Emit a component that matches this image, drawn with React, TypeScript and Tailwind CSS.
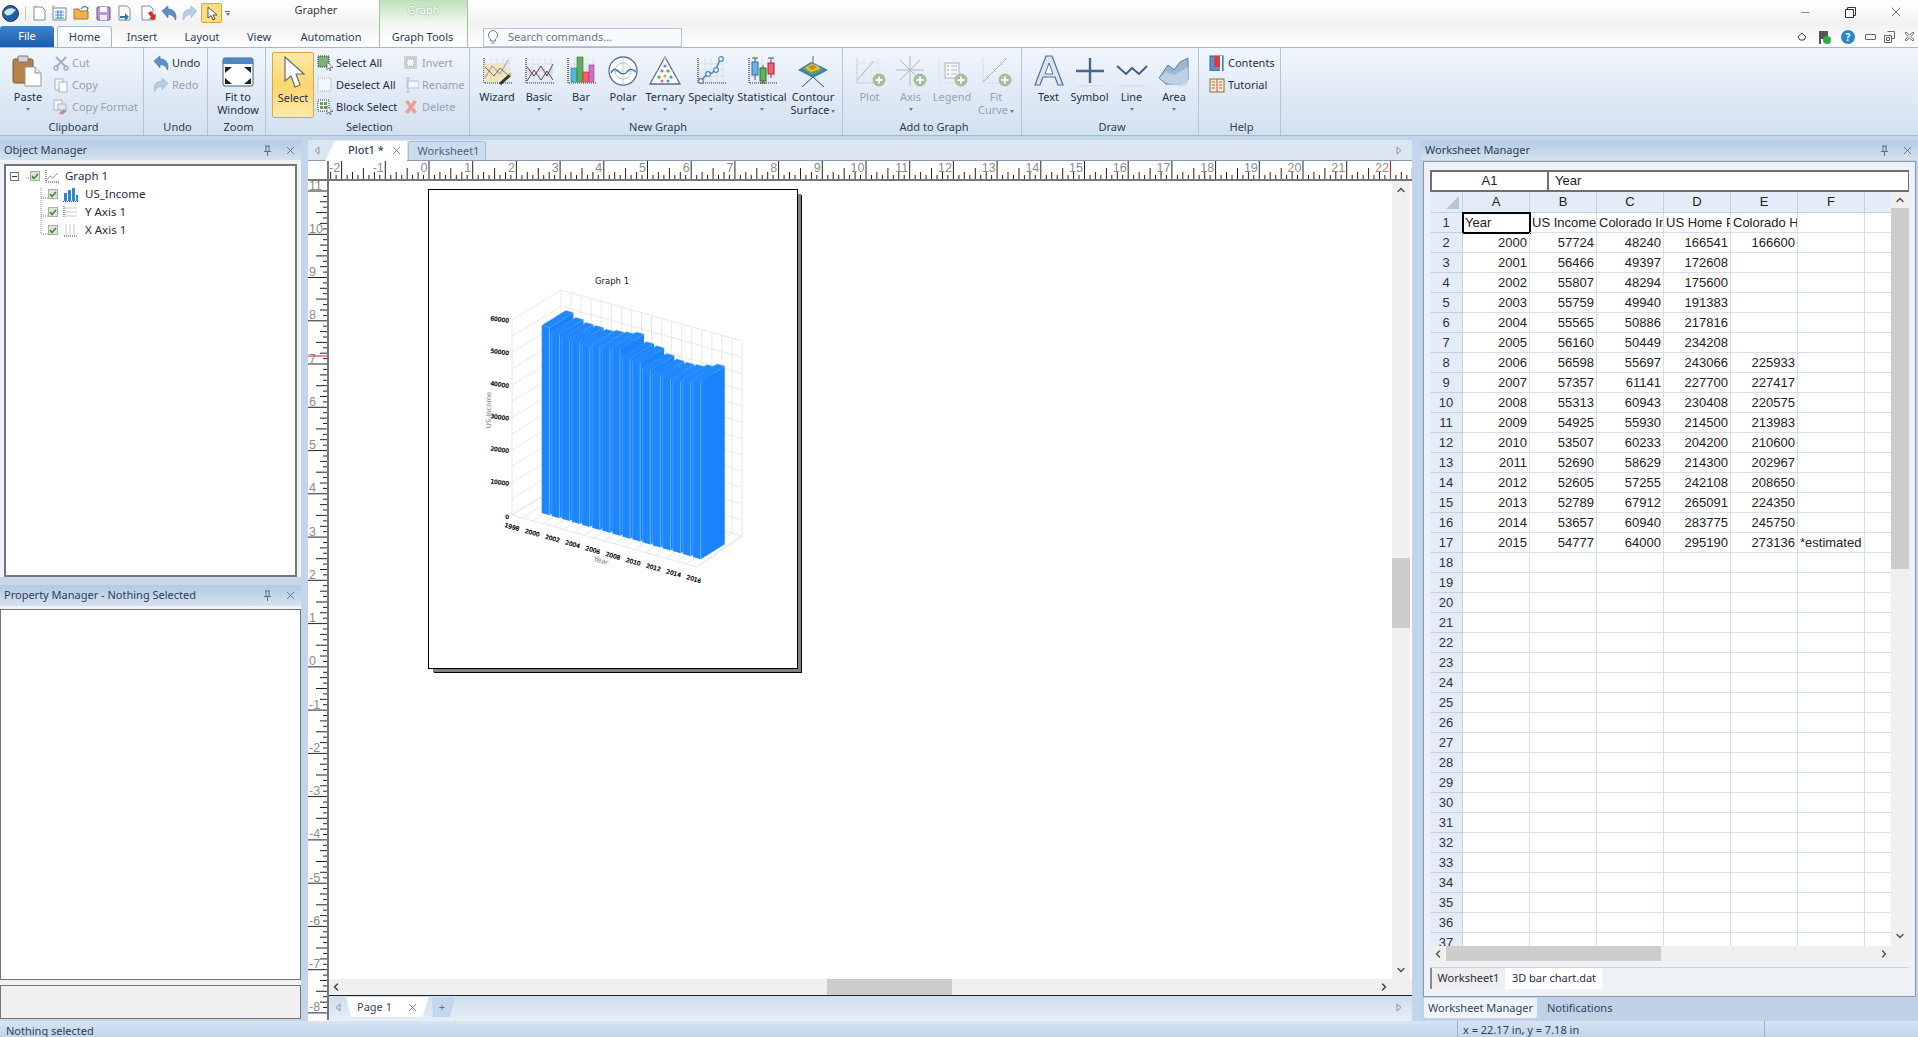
import React from "react";
import { ChevronUp, ChevronDown, ChevronLeft, ChevronRight, X, Minus } from "lucide-react";

const sheetRows: (string | number)[][] = [
  [2000, 57724, 48240, 166541, 166600],
  [2001, 56466, 49397, 172608],
  [2002, 55807, 48294, 175600],
  [2003, 55759, 49940, 191383],
  [2004, 55565, 50886, 217816],
  [2005, 56160, 50449, 234208],
  [2006, 56598, 55697, 243066, 225933],
  [2007, 57357, 61141, 227700, 227417],
  [2008, 55313, 60943, 230408, 220575],
  [2009, 54925, 55930, 214500, 213983],
  [2010, 53507, 60233, 204200, 210600],
  [2011, 52690, 58629, 214300, 202967],
  [2012, 52605, 57255, 242108, 208650],
  [2013, 52789, 67912, 265091, 224350],
  [2014, 53657, 60940, 283775, 245750],
  [2015, 54777, 64000, 295190, 273136],
];
const income = sheetRows.map((r) => r[1] as number);

/* ---------- small drawings ---------- */

function PlusBadge() {
  return (
    <g>
      <circle cx="25" cy="25" r="6.5" fill="#a3bf9f" />
      <path d="M25 21.5v7M21.5 25h7" stroke="#fff" strokeWidth="2" />
    </g>
  );
}

function Ico({ s = 32, children }: { s?: number; children: React.ReactNode }) {
  return (
    <svg width={s} height={s} viewBox={`0 0 ${s} ${s}`} fill="none" className="shrink-0">
      {children}
    </svg>
  );
}

const GridBack = () => (
  <path d="M4 3v24h26M10 3v24M16 3v24M22 3v24M28 3v24M4 9h26M4 15h26M4 21h26" stroke="#d5dbe3" strokeWidth="0.7" />
);
const AxisDots = () => <path d="M3 3v25h28" stroke="#333" strokeWidth="1.2" strokeDasharray="1 1" />;

const icons: Record<string, React.ReactNode> = {
  paste: (
    <Ico>
      <rect x="1" y="4" width="20" height="24" rx="2" fill="#b5824c" stroke="#7c5a33" />
      <rect x="6" y="1" width="10" height="6" rx="1" fill="#d5d5d5" stroke="#777" />
      <path d="M13 12h10l6 6v13H13z" fill="#fff" stroke="#8a97a6" />
      <path d="M23 12v6h6" fill="#e6edf4" stroke="#8a97a6" />
    </Ico>
  ),
  fit: (
    <Ico>
      <rect x="1" y="3" width="30" height="28" rx="2" fill="#fff" stroke="#3b5c83" />
      <path d="M1 5a2 2 0 0 1 2-2h26a2 2 0 0 1 2 2v4H1z" fill="#4d86c6" />
      <path d="M3 12l7 0-7 6zM29 12l-7 0 7 6zM3 29l7 0-7-6zM29 29l-7 0 7-6z" fill="#222" />
    </Ico>
  ),
  select: (
    <Ico>
      <path d="M8 1l0 24 6-5 4 11 5-2-4-11 8 0z" fill="#fff" stroke="#6b6b6b" strokeWidth="1.2" />
    </Ico>
  ),
  wizard: (
    <Ico>
      <GridBack />
      <AxisDots />
      <path d="M3 9l9 0 14 0 0 14-9 4H3z" fill="#efe4ae" opacity="0.8" />
      <path d="M4 23l7-12 8 8 8-14" stroke="#c79ad0" strokeWidth="1.3" />
      <path d="M4 12l9 9 6-8 9 8" stroke="#555" strokeWidth="0.8" />
      <path d="M18 28l10-9 2 2-10 9z" fill="#333" />
      <path d="M27 19l2-2 2 2-2 2z" fill="#e9c23c" />
    </Ico>
  ),
  basic: (
    <Ico>
      <GridBack />
      <AxisDots />
      <path d="M4 10l7 10 7-9 6 9 6-10v8l-6 6-6-9-7 9-7-8z" fill="#f1c9ec" opacity="0.7" />
      <path d="M4 26l7-11 7 10 6-9 6 9M4 12l7 9 7-10 6 10 6-12" stroke="#3f3f3f" strokeWidth="0.9" />
    </Ico>
  ),
  bar: (
    <Ico>
      <GridBack />
      <AxisDots />
      <rect x="6" y="13" width="6" height="14" fill="#56b6d9" stroke="#2f7f9f" strokeWidth="0.6" />
      <rect x="12" y="2" width="6" height="25" fill="#5fae5a" stroke="#2f7430" strokeWidth="0.6" />
      <rect x="18" y="17" width="6" height="10" fill="#ff5a6e" stroke="#b52e3c" strokeWidth="0.6" />
      <rect x="24" y="10" width="5" height="17" fill="#cf6fc7" stroke="#8e4389" strokeWidth="0.6" />
    </Ico>
  ),
  polar: (
    <Ico>
      <circle cx="16" cy="16" r="14" fill="#fff" stroke="#5d7892" strokeWidth="1.4" />
      <circle cx="16" cy="16" r="8" stroke="#b6c4d2" />
      <path d="M2 16h28M16 2v28" stroke="#c4ced9" />
      <path d="M4 18c3-6 6-3 8-1s6 3 8 0 5-4 9 0" stroke="#2f6ea8" strokeWidth="1.3" />
    </Ico>
  ),
  ternary: (
    <Ico>
      <path d="M16 2L31 29H1z" fill="#fff" stroke="#5a6b7c" strokeWidth="1.3" />
      <path d="M8 16h16M4 23h24M16 2L9 29M16 2l7 27" stroke="#d5dce3" strokeWidth="0.7" />
      <circle cx="16" cy="11" r="1.6" fill="#5b8fc7" />
      <circle cx="13" cy="16" r="1.6" fill="#c766b8" />
      <circle cx="19" cy="16" r="1.6" fill="#57a657" />
      <circle cx="10" cy="22" r="1.6" fill="#57a657" />
      <circle cx="16" cy="21" r="1.6" fill="#e0a23c" />
      <circle cx="22" cy="22" r="1.6" fill="#5b8fc7" />
      <circle cx="13" cy="26" r="1.6" fill="#c766b8" />
      <circle cx="19" cy="26" r="1.6" fill="#5b8fc7" />
    </Ico>
  ),
  specialty: (
    <Ico>
      <GridBack />
      <AxisDots />
      <path d="M6 26l6-7 5-1 4-4 4-9" stroke="#4a86bd" strokeWidth="1.5" />
      <circle cx="6" cy="26" r="2.3" fill="#fff" stroke="#4a86bd" strokeWidth="1.2" />
      <circle cx="13" cy="19" r="2.3" fill="#fff" stroke="#4a86bd" strokeWidth="1.2" />
      <circle cx="21" cy="15" r="2.3" fill="#fff" stroke="#4a86bd" strokeWidth="1.2" />
      <circle cx="26" cy="4" r="2.3" fill="#fff" stroke="#4a86bd" strokeWidth="1.2" />
    </Ico>
  ),
  statistical: (
    <Ico>
      <GridBack />
      <AxisDots />
      <path d="M9 3v22M17 10v18M25 3v20M6 3h6M14 28h6M22 3h6" stroke="#444" strokeWidth="0.9" />
      <rect x="6" y="7" width="6" height="13" fill="#6cb2e4" stroke="#2f6ea8" />
      <rect x="14" y="13" width="6" height="13" fill="#69ae5c" stroke="#2d6e2d" />
      <rect x="22" y="8" width="6" height="11" fill="#f1626f" stroke="#a12c37" />
    </Ico>
  ),
  contour: (
    <Ico>
      <path d="M16 1v8" stroke="#444" strokeWidth="0.8" />
      <path d="M16 22L5 32M16 22l11 10" stroke="#333" strokeWidth="0.9" />
      <path d="M1 15L14 7l5 2 12 6-15 8z" fill="#3f78b5" />
      <path d="M5 14l9-6 6 2 7 5-12 5z" fill="#5aa85a" />
      <path d="M8 13l7-4 6 2 2 3-9 3z" fill="#e9c23c" />
      <path d="M11 12l5-2 4 2-5 3z" fill="#e5762e" />
    </Ico>
  ),
  plot: (
    <Ico>
      <path d="M3 3v25h26M3 8h26M3 14h26M3 20h26M10 3v25M17 3v25M24 3v25" stroke="#e1e5ea" strokeWidth="0.7" />
      <path d="M3 25L20 6" stroke="#a9b2bc" strokeWidth="1" />
      <path d="M3 3v25h22" stroke="#bbb" strokeWidth="1" strokeDasharray="1 1" />
      <PlusBadge />
    </Ico>
  ),
  axis: (
    <Ico>
      <path d="M15 1v30M1 15h28M5 5l20 20M25 5L5 25" stroke="#aeb6bf" strokeWidth="1" />
      <PlusBadge />
    </Ico>
  ),
  legend: (
    <Ico>
      <path d="M3 3v25h24M20 3L3 20" stroke="#c9ced4" strokeWidth="0.9" strokeDasharray="1 1" />
      <rect x="9" y="8" width="14" height="15" fill="#f7f8fa" stroke="#aab2bc" />
      <path d="M11 11h2M11 15h2M11 19h2" stroke="#a9bf9f" strokeWidth="1.5" />
      <path d="M15 11h6M15 15h6M15 19h6" stroke="#b5bcc4" />
      <PlusBadge />
    </Ico>
  ),
  fitcurve: (
    <Ico>
      <path d="M3 3v25h24" stroke="#ccc" strokeDasharray="1 1" />
      <path d="M3 27L27 3" stroke="#aeb6bf" />
      <path d="M6 21l3 3M9 21l-3 3M13 14l3 3M16 14l-3 3M20 7l3 3M23 7l-3 3" stroke="#aeb6bf" strokeWidth="0.9" />
      <PlusBadge />
    </Ico>
  ),
  text: (
    <Ico>
      <path d="M13 1h6l11 29h-5l-3-8H10l-3 8H2z" fill="#dbe5f1" stroke="#4d6f9e" strokeWidth="1.2" />
      <path d="M16 8l4 11h-8z" fill="#fff" stroke="#4d6f9e" />
    </Ico>
  ),
  symbol: (
    <Ico>
      <path d="M16 3v25M2 16h28" stroke="#46658f" strokeWidth="2.4" />
      <path d="M3 31h26" stroke="#d3dbe5" />
    </Ico>
  ),
  line: (
    <Ico>
      <path d="M1 11l9 8 6-6 7 6 8-8" stroke="#3f5a7f" strokeWidth="1.8" />
      <path d="M3 31h26" stroke="#d3dbe5" />
    </Ico>
  ),
  area: (
    <Ico>
      <path d="M1 23l9-13 6 5 6-8 8-4v22l-6 4H8z" fill="#9eb7d6" stroke="#5d7ba3" />
      <path d="M8 28l-7-5 7-6 8 3 14-8v17l-6 3z" fill="#c7d6e8" opacity="0.8" />
    </Ico>
  ),
  cut: (
    <Ico s={16}>
      <path d="M3 2l10 10M13 2L3 12" stroke="#9db0c6" strokeWidth="2" />
      <circle cx="3" cy="13" r="2" stroke="#9db0c6" strokeWidth="1.4" />
      <circle cx="13" cy="13" r="2" stroke="#9db0c6" strokeWidth="1.4" />
    </Ico>
  ),
  copy: (
    <Ico s={16}>
      <path d="M2 2h8v11H2z" fill="#f5f7fa" stroke="#a7b4c2" />
      <path d="M6 5h8v10H6z" fill="#fff" stroke="#a7b4c2" />
    </Ico>
  ),
  copyformat: (
    <Ico s={16}>
      <path d="M1 1h8v10H1z" fill="#f5f7fa" stroke="#a7b4c2" />
      <path d="M5 5l8 0v6H5z" fill="#e4e8ed" stroke="#a7b4c2" />
      <path d="M6 14l5-4 3 2-5 4z" fill="#c7928a" />
    </Ico>
  ),
  undo: (
    <Ico s={16}>
      <path d="M1 6l6-5v3c5 0 8 3 8 8 0 1-.3 2-.6 3-1-3.500-3.400-5.500-7.400-5.500V13z" fill="#5d8fc9" stroke="#3a6aa6" strokeWidth="0.6" />
    </Ico>
  ),
  redo: (
    <Ico s={16}>
      <path d="M15 6L9 1v3C4 4 1 7 1 12c0 1 .3 2 .6 3C2.600 11.500 5 9.500 9 9.500V13z" fill="#b7cbe2" stroke="#9db6d2" strokeWidth="0.6" />
    </Ico>
  ),
  selectall: (
    <Ico s={16}>
      <rect x="1" y="1" width="11" height="11" fill="#7fb27a" stroke="#333" strokeDasharray="1 1" />
      <path d="M10 7v8l2-2 1 3 1-.5-1-3h3z" fill="#fff" stroke="#444" strokeWidth="0.6" />
    </Ico>
  ),
  deselect: (
    <Ico s={16}>
      <rect x="1" y="1" width="13" height="13" fill="#f3f6fa" stroke="#aab4bf" strokeDasharray="1 1" />
    </Ico>
  ),
  block: (
    <Ico s={16}>
      <rect x="1" y="1" width="11" height="11" fill="#fff" stroke="#333" strokeDasharray="1 1" />
      <path d="M3 3h3v3H3zM7 3h3v3H7zM3 7h3v3H3zM7 7h3v3H7z" fill="#5da458" />
      <path d="M10 7v8l2-2 1 3 1-.5-1-3h3z" fill="#fff" stroke="#444" strokeWidth="0.6" />
    </Ico>
  ),
  invert: (
    <Ico s={16}>
      <rect x="1" y="1" width="13" height="13" fill="#c9d6c8" />
      <rect x="4" y="4" width="7" height="7" fill="#f4f6f7" stroke="#9aa5b0" strokeDasharray="1 1" />
    </Ico>
  ),
  rename: (
    <Ico s={16}>
      <path d="M4 4h12v7H4z" fill="#f3f6fa" stroke="#b4bfca" />
      <path d="M5 1v14M3 1h4M3 15h4" stroke="#b4bfca" />
    </Ico>
  ),
  del: (
    <Ico s={16}>
      <path d="M2 3l3-2 3 4 3-4 3 2-4 5 4 5-3 2-3-4-3 4-3-2 4-5z" fill="#ef9d94" />
    </Ico>
  ),
  contents: (
    <Ico s={16}>
      <rect x="1" y="1" width="13" height="15" fill="#5a93cc" stroke="#2e6194" />
      <rect x="5" y="1" width="6" height="11" fill="#d63f3f" />
      <rect x="11" y="1" width="2" height="15" fill="#fff" />
    </Ico>
  ),
  tutorial: (
    <Ico s={16}>
      <rect x="1" y="2" width="14" height="13" fill="#f6ecd6" stroke="#8a6a45" />
      <path d="M8 2v13M3 5h3M3 8h3M3 11h3M10 5h3M10 8h3M10 11h3" stroke="#c25548" />
    </Ico>
  ),
};

/* ---------- ribbon ---------- */

function Caret({ className = "" }: { className?: string }) {
  return <span className={`inline-block border-x-[2.5px] border-t-[3px] border-x-transparent border-t-[#6a7a8c] ${className}`} />;
}

function LargeBtn({
  w, icon, lines, arrow, disabled, active,
}: {
  w: string; icon: string; lines: string[]; arrow?: boolean; disabled?: boolean; active?: boolean;
}) {
  return (
    <div
      className={`flex flex-col items-center shrink-0 h-[66px] ${w} ${
        active ? "rounded-[2px] border border-[#d9a83e] bg-gradient-to-b from-[#fde9a8] via-[#fbd66d] to-[#fdeaa9]" : ""
      }`}
    >
      <div className="h-[38px] flex items-center justify-center">{icons[icon]}</div>
      {lines.map((l, i) => (
        <div
          key={l}
          className={`h-[13px] leading-[13px] whitespace-nowrap ${disabled ? "text-[#94a3b4]" : "text-[#1d3048]"}`}
        >
          {l}
          {arrow && i === 1 && <Caret className="ml-[2px] align-middle" />}
        </div>
      ))}
      {arrow && lines.length === 1 && <Caret className="mt-[5px]" />}
    </div>
  );
}

function SmallBtn({ icon, label, disabled }: { icon: string; label: string; disabled?: boolean }) {
  return (
    <div className={`h-[22px] flex items-center gap-[3px] whitespace-nowrap ${disabled ? "text-[#94a3b4]" : "text-[#1d3048]"}`}>
      {icons[icon]}
      <span>{label}</span>
    </div>
  );
}

function Group({ w, label, pad, children }: { w: string; label: string; pad: string; children: React.ReactNode }) {
  return (
    <div className={`flex flex-col shrink-0 h-full border-r border-[#b4c5d9] ${w}`}>
      <div className={`flex flex-1 pt-[4px] ${pad}`}>{children}</div>
      <div className="h-[17px] pt-[1px] pl-[4px] leading-[15px] text-center text-[#2b4058]">{label}</div>
    </div>
  );
}

function Ribbon() {
  return (
    <div className="flex h-[89px] border-y border-[#a3b8d1] bg-gradient-to-b from-[#f1f6fc] to-[#d2e0f0] text-[11px]">
      <Group w="w-[144px]" label="Clipboard" pad="pl-[6px]">
        <LargeBtn w="w-[44px]" icon="paste" lines={["Paste"]} arrow />
        <div className="ml-[3px]">
          <SmallBtn icon="cut" label="Cut" disabled />
          <SmallBtn icon="copy" label="Copy" disabled />
          <SmallBtn icon="copyformat" label="Copy Format" disabled />
        </div>
      </Group>
      <Group w="w-[64px]" label="Undo" pad="pl-[9px]">
        <div>
          <SmallBtn icon="undo" label="Undo" />
          <SmallBtn icon="redo" label="Redo" disabled />
        </div>
      </Group>
      <Group w="w-[58px]" label="Zoom" pad="pl-[9px]">
        <LargeBtn w="w-[42px]" icon="fit" lines={["Fit to", "Window"]} />
      </Group>
      <Group w="w-[204px]" label="Selection" pad="pl-[6px]">
        <LargeBtn w="w-[42px]" icon="select" lines={["Select"]} active />
        <div className="ml-[3px] w-[86px]">
          <SmallBtn icon="selectall" label="Select All" />
          <SmallBtn icon="deselect" label="Deselect All" />
          <SmallBtn icon="block" label="Block Select" />
        </div>
        <div>
          <SmallBtn icon="invert" label="Invert" disabled />
          <SmallBtn icon="rename" label="Rename" disabled />
          <SmallBtn icon="del" label="Delete" disabled />
        </div>
      </Group>
      <Group w="w-[373px]" label="New Graph" pad="pl-[6px]">
        <LargeBtn w="w-[42px]" icon="wizard" lines={["Wizard"]} />
        <LargeBtn w="w-[42px]" icon="basic" lines={["Basic"]} arrow />
        <LargeBtn w="w-[42px]" icon="bar" lines={["Bar"]} arrow />
        <LargeBtn w="w-[42px]" icon="polar" lines={["Polar"]} arrow />
        <LargeBtn w="w-[42px]" icon="ternary" lines={["Ternary"]} arrow />
        <LargeBtn w="w-[50px]" icon="specialty" lines={["Specialty"]} arrow />
        <LargeBtn w="w-[52px]" icon="statistical" lines={["Statistical"]} arrow />
        <LargeBtn w="w-[50px]" icon="contour" lines={["Contour", "Surface"]} arrow />
      </Group>
      <Group w="w-[179px]" label="Add to Graph" pad="pl-[6px]">
        <LargeBtn w="w-[41px]" icon="plot" lines={["Plot"]} disabled />
        <LargeBtn w="w-[41px]" icon="axis" lines={["Axis"]} arrow disabled />
        <LargeBtn w="w-[42px]" icon="legend" lines={["Legend"]} disabled />
        <LargeBtn w="w-[46px]" icon="fitcurve" lines={["Fit", "Curve"]} arrow disabled />
      </Group>
      <Group w="w-[177px]" label="Draw" pad="pl-[6px]">
        <LargeBtn w="w-[41px]" icon="text" lines={["Text"]} />
        <LargeBtn w="w-[41px]" icon="symbol" lines={["Symbol"]} />
        <LargeBtn w="w-[43px]" icon="line" lines={["Line"]} arrow />
        <LargeBtn w="w-[42px]" icon="area" lines={["Area"]} arrow />
      </Group>
      <Group w="w-[82px]" label="Help" pad="pl-[10px]">
        <div>
          <SmallBtn icon="contents" label="Contents" />
          <SmallBtn icon="tutorial" label="Tutorial" />
        </div>
      </Group>
    </div>
  );
}

/* ---------- title area ---------- */

function QuickAccess() {
  return (
    <div className="flex items-center h-full pl-[2px] w-[293px]">
      <svg width="17" height="17" viewBox="0 0 17 17" className="shrink-0">
        <circle cx="8.500" cy="8.500" r="8" fill="#1f5fa8" stroke="#27384d" />
        <path d="M2 7c3-4 8-5 12-2-2 1-3 4-6 5s-5 0-6-3z" fill="#cfe3f7" />
      </svg>
      <span className="w-px h-[15px] bg-[#c8c8c8] ml-[6px] mr-[7px]" />
      <svg width="13" height="16" viewBox="0 0 13 16" className="mr-[5px]"><path d="M1 2h8l3 3v10H1z" fill="#fff" stroke="#7a8da3" /><path d="M0 2l3-2 1 3z" fill="#e9b93c" /></svg>
      <svg width="16" height="16" viewBox="0 0 16 16" className="mr-[6px]"><rect x="2" y="3" width="13" height="12" fill="#fff" stroke="#6c8cad" /><path d="M4 7h9M4 10h9M4 13h9M7 5v9M10 5v9" stroke="#3c8fce" /><path d="M0 2l3-2 1 3z" fill="#e9b93c" /></svg>
      <svg width="17" height="16" viewBox="0 0 17 16" className="mr-[6px]"><path d="M1 14V4h5l1 2h8v8z" fill="#e9b44c" stroke="#a87a25" /><path d="M8 4c2-3 5-3 7-1l-1 3" stroke="#3d7fc0" strokeWidth="1.3" fill="none" /></svg>
      <svg width="15" height="15" viewBox="0 0 15 15" className="mr-[7px]"><rect x="1" y="1" width="13" height="13" rx="1" fill="#b79ad4" stroke="#6d4f94" /><rect x="4" y="1" width="7" height="5" fill="#fff" /><rect x="4" y="9" width="7" height="5" fill="#efe9f5" /></svg>
      <svg width="13" height="16" viewBox="0 0 13 16" className="mr-[10px]"><path d="M1 1h8l3 3v11H1z" fill="#fff" stroke="#7a8da3" /><path d="M2 11h5V8l4 4-4 4v-3H2z" fill="#2f78b8" /></svg>
      <svg width="16" height="16" viewBox="0 0 16 16" className="mr-[4px]"><path d="M1 1h8l3 3v11H1z" fill="#fff" stroke="#7a8da3" /><path d="M7 8l3-2 3 4 2-1-1 6-6-1 2-2z" fill="#d92b2b" /></svg>
      <span className="mr-[5px]">{icons.undo}</span>
      <span className="mr-[3px]">{icons.redo}</span>
      <span className="w-[21px] h-[20px] flex items-center justify-center border border-[#d9a83e] rounded-[2px] bg-[#fcdc82]">
        <svg width="12" height="15" viewBox="0 0 12 15"><path d="M2 1v11l3-2.500 2 4.500 2-1-2-4h4z" fill="#fff" stroke="#555" /></svg>
      </span>
      <span className="ml-[3px] flex flex-col items-center gap-[1px]">
        <span className="w-[5px] h-px bg-[#666]" />
        <Caret />
      </span>
    </div>
  );
}

function TitleArea() {
  const tab = "flex items-center justify-center text-[#2b3f57]";
  return (
    <div className="flex h-[47px] bg-gradient-to-b from-white via-[#f2f2f2] to-white text-[11px]">
      <div className="w-[379px] shrink-0 flex flex-col">
        <div className="h-[26px] flex items-center">
          <QuickAccess />
          <span className="text-[#3a3a3a] w-[46px] text-center pb-[5px]">Grapher</span>
        </div>
        <div className="flex h-[21px]">
          <div className="w-[54px] h-full rounded-t-[3px] flex items-center justify-center text-white bg-gradient-to-b from-[#3f85cf] to-[#1c5ca8]">File</div>
          <div className="w-[3px]" />
          <div className={`w-[55px] h-full pt-[1px] ${tab} bg-gradient-to-b from-white to-[#f1f6fc] border-x border-t border-[#a3b8d1] rounded-t-[3px] -mb-px z-10`}>Home</div>
          <div className={`w-[60px] h-full pt-[2px] ${tab}`}>Insert</div>
          <div className={`w-[60px] h-full pt-[2px] ${tab}`}>Layout</div>
          <div className={`w-[54px] h-full pt-[2px] ${tab}`}>View</div>
          <div className={`w-[90px] h-full pt-[2px] ${tab}`}>Automation</div>
        </div>
      </div>
      <div className="w-[89px] shrink-0 flex flex-col border-x border-[#9cc59a] bg-gradient-to-b from-[#bfe0bb] via-[#f1f8f0] to-white">
        <div className="h-[26px] pb-[6px] flex items-center justify-center text-white [text-shadow:0_0_2px_#7a9a78]">Graph</div>
        <div className={`h-[21px] pt-[2px] pr-[2px] ${tab}`}>Graph Tools</div>
      </div>
      <div className="flex-1 flex flex-col">
        <div className="h-[26px] flex justify-end text-[#333]">
          <span className="w-[45px] flex items-center justify-center pb-[2px]"><Minus size={13} strokeWidth={1} /></span>
          <span className="w-[45px] flex items-center justify-center pb-[2px]">
            <svg width="11" height="11" viewBox="0 0 11 11" fill="none" stroke="#333"><path d="M.5 2.500h8v8h-8zM2.500 2.500v-2h8v8h-2" /></svg>
          </span>
          <span className="w-[45px] flex items-center justify-center pb-[2px]"><X size={16} strokeWidth={1} /></span>
        </div>
        <div className="h-[21px] flex items-center">
          <div className="ml-[15px] w-[199px] h-[19px] mt-[1px] flex items-center bg-[#f8fafd] border border-[#b7c6d8] text-[#66788c]">
            <svg width="12" height="14" viewBox="0 0 12 14" fill="none" stroke="#6d7f92" className="ml-[3px] mr-[9px]"><path d="M3.500 9C2 8 1.500 6.500 1.500 5a4.500 4.500 0 0 1 9 0c0 1.500-.5 3-2 4v2h-5zM4.500 13h3" /></svg>
            Search commands...
          </div>
          <div className="ml-auto flex items-center h-full mr-[-1px]">
            <span className="w-[23px] flex justify-center">
              <svg width="10" height="9" viewBox="0 0 10 9" fill="none" stroke="#444"><path d="M1 5l4-4 4 4-2 3H3z" /></svg>
            </span>
            <span className="w-[23px] flex justify-center">
              <svg width="15" height="16" viewBox="0 0 15 16"><path d="M2 2h9v8H4v5H2z" fill="#555" /><circle cx="10" cy="11" r="4" fill="#2eaf4a" /></svg>
            </span>
            <span className="w-[24px] flex justify-center">
              <span className="w-[14px] h-[14px] rounded-full bg-[#2d86c9] text-white text-[10px] font-bold leading-[14px] text-center">?</span>
            </span>
            <span className="w-[20px] flex justify-center"><span className="w-[11px] h-[6px] rounded-[1px] border border-[#666]" /></span>
            <span className="w-[19px] flex justify-center">
              <svg width="11" height="12" viewBox="0 0 11 12" fill="none" stroke="#666"><path d="M3.500.5h7v7h-3M.5 4.500h7v7h-7zM2.500 6.500h3v3h-3z" /></svg>
            </span>
            <span className="w-[20px] flex justify-center">
              <svg width="11" height="11" viewBox="0 0 11 11" fill="none" stroke="#777"><path d="M1 2l1-1 3.500 3L9 1l1 1-3 3.500 3 3.500-1 1-3.500-3L2 10 1 9l3-3.500z" /></svg>
            </span>
          </div>
        </div>
      </div>
    </div>
  );
}

/* ---------- panels ---------- */

function PanelHeader({ title, h = "h-[20px]" }: { title: string; h?: string }) {
  return (
    <div className={`flex items-center shrink-0 text-[11px] text-[#2a3f58] bg-gradient-to-b from-[#b4c9e3] to-[#d6e2f0] ${h}`}>
      <span className="pl-[4px] flex-1">{title}</span>
      <svg width="9" height="11" viewBox="0 0 9 11" fill="none" stroke="#5d6e82" className="mr-[12px]">
        <path d="M2 1h5M3 1v5M6 1v5M1 6.500h7M4.500 7v4" />
      </svg>
      <X size={13} strokeWidth={1.6} className="mr-[4px] text-[#5d6e82]" />
    </div>
  );
}

function Check() {
  return (
    <span className="w-[10px] h-[10px] shrink-0 flex items-center justify-center bg-[#dbe6d5] border border-[#a8b2a4]">
      <svg width="8" height="7" viewBox="0 0 8 7" fill="none" stroke="#3f8a3c" strokeWidth="1.6"><path d="M1 3l2 2.500L7 1" /></svg>
    </span>
  );
}

function TreeRow({ indent, icon, label, first }: { indent: string; icon: React.ReactNode; label: string; first?: boolean }) {
  return (
    <div className={`h-[18px] flex items-center ${indent}`}>
      {first && (
        <span className="w-[9px] h-[9px] mr-[11px] border border-[#777] flex items-center justify-center">
          <span className="w-[5px] h-px bg-[#333]" />
        </span>
      )}
      <Check />
      <span className={`w-[16px] ml-[5px] ${first ? "mr-[4px]" : "mr-[6px]"}`}>{icon}</span>
      <span className="text-[#1f2d3d]">{label}</span>
    </div>
  );
}

function LeftPanel() {
  return (
    <div className="w-[301px] shrink-0 flex flex-col bg-[#eef3f9]">
      <PanelHeader title="Object Manager" />
      <div className="relative h-[413px] mt-[4px] mx-[4px] bg-white border-2 border-[#767676] pt-[1px] text-[11.5px]">
        <TreeRow
          first
          indent="pl-[4px]"
          label="Graph 1"
          icon={<svg width="15" height="14" viewBox="0 0 15 14" fill="none"><path d="M1 1v12h13" stroke="#333" strokeDasharray="1 1" /><path d="M2 11l3-4 3 2 5-5" stroke="#8aa" /></svg>}
        />
        <TreeRow
          indent="pl-[42px]"
          label="US_Income"
          icon={<svg width="16" height="15" viewBox="0 0 16 15"><path d="M1 14V6h3v8zM5 14V3h3v11zM9 14V1h3v13zM13 14V8h2v6z" fill="#2f88c8" /><path d="M0 14.500h16" stroke="#444" strokeDasharray="1 1" /></svg>}
        />
        <TreeRow
          indent="pl-[42px]"
          label="Y Axis 1"
          icon={<svg width="15" height="14" viewBox="0 0 15 14" fill="none"><path d="M1 1v12" stroke="#333" strokeDasharray="1 1" /><path d="M1 3h13M1 7h13M1 11h13" stroke="#c5c9ce" /></svg>}
        />
        <TreeRow
          indent="pl-[42px]"
          label="X Axis 1"
          icon={<svg width="15" height="14" viewBox="0 0 15 14" fill="none"><path d="M1 13h13" stroke="#333" strokeDasharray="1 1" /><path d="M3 1v12M7 1v12M11 1v12" stroke="#c5c9ce" /></svg>}
        />
        <svg width="60" height="70" className="absolute left-[11px] top-[8px]" fill="none" stroke="#888" strokeDasharray="1 1">
          <path d="M9 4h9M24 14v46M24 24h8M24 42h8M24 60h8" />
        </svg>
      </div>
      <div className="h-[8px] shrink-0 bg-[#c7d7ea]" />
      <PanelHeader title="Property Manager - Nothing Selected" h="h-[21px]" />
      <div className="flex-1 mt-[3px] bg-white border border-[#767676]" />
      <div className="h-[34px] mt-[5px] bg-[#f0f0f0] border border-[#767676] shrink-0" />
      <div className="h-[2px] shrink-0 bg-[#c7d7ea]" />
    </div>
  );
}

function HRuler() {
  const inch = 43.7;
  const ticks = [];
  const labels = [];
  for (let k = -3 * 8; k <= 24 * 8; k++) {
    const x = 100 + (k * inch) / 8;
    const h = k % 8 === 0 ? 18 : k % 4 === 0 ? 11 : k % 2 === 0 ? 7 : 4;
    ticks.push(<path key={k} d={`M${x.toFixed(1)} 18V${18 - h}`} stroke="#222" strokeWidth="1" />);
    if (k % 8 === 0) {
      labels.push(
        <text key={k} x={x - 1.5} y="11" textAnchor="end" fontSize="12.5" fill="#8b8b8b" fontFamily="Liberation Sans">
          {k / 8}
        </text>
      );
    }
  }
  return (
    <svg width="1083" height="20" viewBox="0 0 1083 20" className="block">
      {labels}
      {ticks}
      <path d="M0 19h1083" stroke="#777" strokeWidth="2" />
      <path d="M1061.500 0v18" stroke="#c92a2a" strokeWidth="1" />
    </svg>
  );
}

function VRuler() {
  const inch = 43.26;
  const ticks = [];
  const labels = [];
  for (let k = 0; k <= 19 * 8; k++) {
    const y = 10 + (k * inch) / 8;
    const h = k % 8 === 0 ? 19 : k % 4 === 0 ? 11 : k % 2 === 0 ? 7 : 4;
    ticks.push(<path key={k} d={`M19 ${y.toFixed(1)}H${19 - h}`} stroke="#222" strokeWidth="1" />);
    if (k % 8 === 0) {
      labels.push(
        <text key={k} x="1" y={y - 1.5} fontSize="12.5" fill="#8b8b8b" fontFamily="Liberation Sans">
          {11 - k / 8}
        </text>
      );
    }
  }
  return (
    <svg width="21" height="839" viewBox="0 0 21 839" className="block shrink-0 bg-white">
      {labels}
      {ticks}
      <path d="M20 0v839" stroke="#777" strokeWidth="2" />
      <path d="M0 175h19" stroke="#c92a2a" strokeWidth="1" />
    </svg>
  );
}

function Tri({ right }: { right?: boolean }) {
  return (
    <svg width="6" height="9" viewBox="0 0 6 9" fill="none" stroke="#8394a8">
      <path d={right ? "M1 1l4 3.500L1 8z" : "M5 1L1 4.500 5 8z"} />
    </svg>
  );
}

function Chart() {
  const lerp = (a: number[], b: number[], t: number) => [a[0] + (b[0] - a[0]) * t, a[1] + (b[1] - a[1]) * t];
  const A = [512, 515], B = [561, 485], C = [742, 536], D = [697, 567];
  const grid = [];
  for (let k = 0; k <= 12; k++) {
    const u = k * 16.25;
    grid.push(`M${A[0]} ${A[1] - u}L${B[0]} ${B[1] - u}L${C[0]} ${C[1] - u}`);
  }
  for (let t = 0; t <= 18; t++) {
    const p = lerp(B, C, t / 18);
    const q = lerp(A, D, t / 18);
    grid.push(`M${p[0]} ${p[1] - 195}L${p[0]} ${p[1]}L${q[0]} ${q[1]}`);
  }
  grid.push(`M${A[0]} ${A[1]}V${A[1] - 195}M${A[0]} ${A[1]}L${D[0]} ${D[1]}L${C[0]} ${C[1]}`);

  const w = 7.7, dx = 24, dy = -15;
  const bars = income.map((v, i) => {
    const x = 541.7 + i * 10.09;
    const y = 513 + i * 2.93;
    const h = (v / 10000) * 32.5;
    const y2 = y + w * 0.29;
    const pts = (a: number[][]) => a.map((p) => p.join(",")).join(" ");
    return (
      <g key={i}>
        <polygon points={pts([[x + w, y2], [x + w + dx, y2 + dy], [x + w + dx, y2 + dy - h], [x + w, y2 - h]])} fill="#1a82fb" />
        <polygon points={pts([[x, y - h], [x + w, y2 - h], [x + w + dx, y2 - h + dy], [x + dx, y - h + dy]])} fill="#1f88ff" stroke="#4ea3ff" strokeWidth="0.4" />
        <polygon points={pts([[x, y], [x + w, y2], [x + w, y2 - h], [x, y - h]])} fill="#1c86ff" />
        <path d={`M${x + w} ${y2}V${y2 - h}`} stroke="#74b8ff" strokeWidth="0.8" />
        {i > 0 && <path d={`M${x} ${y}V${y - h}`} stroke="#58a8ff" strokeWidth="0.6" />}
      </g>
    );
  });

  const yLabels = [60000, 50000, 40000, 30000, 20000, 10000];
  const xLabels = [1998, 2000, 2002, 2004, 2006, 2008, 2010, 2012, 2014, 2016];
  const label = { fontSize: "5.9", fill: "#000", stroke: "#000", strokeWidth: "0.3" };
  return (
    <svg width="368" height="478" viewBox="429 190 368 478" className="block" fontFamily="DejaVu Sans">
      <path d={grid.join("")} stroke="#e1e1e1" strokeWidth="0.8" fill="none" />
      {bars}
      <text x="612" y="284" fontSize="8.500" textAnchor="middle" fill="#222">Graph 1</text>
      {yLabels.map((v, i) => (
        <text key={v} x="509" y={321.500 + i * 32.6} textAnchor="end" {...label} transform={`rotate(8 500 ${320 + i * 32.6})`}>
          {v}
        </text>
      ))}
      <text x="509" y="519" textAnchor="end" {...label}>0</text>
      {xLabels.map((v, i) => (
        <text key={v} x={512 + i * 20.2} y={529 + i * 5.8} textAnchor="middle" {...label} transform={`rotate(16 ${512 + i * 20.2} ${527 + i * 5.8})`}>
          {v}
        </text>
      ))}
      <text x="601" y="563" fontSize="7" textAnchor="middle" fill="#777" transform="rotate(16 601 561)">Year</text>
      <text x="491" y="410" fontSize="6.800" textAnchor="middle" fill="#777" transform="rotate(-90 491 410)">US Income</text>
    </svg>
  );
}

function CenterPanel() {
  return (
    <div className="w-[1104px] shrink-0 flex flex-col bg-white">
      <div className="h-[21px] shrink-0 flex items-end text-[11px] bg-[#dbe6f2] border-b border-[#8a9bb0]">
        <span className="w-[17px] h-full flex items-center justify-center"><Tri /></span>
        <div className="w-[82px] h-[20px] -mb-px flex items-center bg-white pl-[23px] text-[#32465e] font-medium border-b border-white [clip-path:polygon(10px_0,100%_0,100%_100%,0_100%)]">
          Plot1 *
          <X size={13} strokeWidth={1.4} className="ml-auto mr-[4px] text-[#5d6e82]" />
        </div>
        <div className="w-[78px] h-[19px] ml-[1px] pl-[3px] flex items-center justify-center bg-[#cbdcee] text-[#4f6681] rounded-t-[3px] border-x border-t border-[#a8bcd3]">
          Worksheet1
        </div>
        <span className="ml-auto w-[26px] h-full flex items-center justify-center"><Tri right /></span>
      </div>
      <div className="flex h-[20px] shrink-0 bg-white">
        <div className="w-[21px] shrink-0 border-r-2 border-b-2 border-[#777]" />
        <HRuler />
      </div>
      <div className="flex-1 flex min-h-0">
        <VRuler />
        <div className="flex-1 flex flex-col min-w-0">
          <div className="flex-1 flex min-h-0">
            <div className="flex-1 pl-[100px] pt-[9px] overflow-hidden">
              <div className="w-[368px] h-[478px] bg-white outline-1 outline-black shadow-[4px_4px_0_0_#808080,5px_5px_0_0_#000]">
                <Chart />
              </div>
            </div>
            <div className="w-[18px] shrink-0 mr-[2px] flex flex-col bg-[#f0f0f0]">
              <div className="h-[18px] flex items-center justify-center"><ChevronUp size={12} strokeWidth={3} className="text-[#555]" /></div>
              <div className="flex-1 pt-[359px]">
                <div className="h-[70px] bg-[#cdcdcd]" />
              </div>
              <div className="h-[18px] flex items-center justify-center"><ChevronDown size={12} strokeWidth={3} className="text-[#555]" /></div>
            </div>
          </div>
          <div className="h-[17px] shrink-0 flex items-center bg-[#f0f0f0] border-b border-[#222]">
            <ChevronLeft size={12} strokeWidth={3} className="text-[#444] ml-[1px]" />
            <div className="ml-[485px] w-[125px] h-full bg-[#cdcdcd]" />
            <ChevronRight size={12} strokeWidth={3} className="text-[#444] ml-[426px]" />
          </div>
          <div className="h-[25px] pt-[1px] shrink-0 flex items-start text-[11px] bg-gradient-to-b from-[#cfdeee] to-[#e6eef7]">
            <span className="w-[17px] h-[20px] flex items-center justify-center"><Tri /></span>
            <div className="w-[83px] h-[20px] flex items-center bg-white pl-[11px] text-[#32465e] rounded-b-[6px] [clip-path:polygon(0_0,100%_0,92%_100%,6%_100%)]">
              Page 1
              <X size={13} strokeWidth={1.4} className="ml-auto mr-[10px] text-[#5d6e82]" />
            </div>
            <div className="w-[26px] h-[20px] flex items-center justify-center text-[#5d6e82] bg-[#c3d6ec] rounded-b-[6px] [clip-path:polygon(10%_0,100%_0,80%_100%,15%_100%)]">+</div>
            <span className="ml-auto w-[26px] h-[20px] flex items-center justify-center"><Tri right /></span>
          </div>
        </div>
      </div>
    </div>
  );
}

function Cell({ value, active, left }: { value?: string | number; active?: boolean; left?: boolean }) {
  return (
    <div
      className={`h-[20px] border-r border-b border-[#d5dee9] overflow-hidden whitespace-nowrap leading-[20px] px-[2px] ${
        left ? "text-left" : "text-right"
      } ${active ? "outline-2 -outline-offset-1 outline-black" : ""}`}
    >
      {value}
    </div>
  );
}

function WorksheetGrid() {
  const cols = ["A", "B", "C", "D", "E", "F", ""];
  const rows = Array.from({ length: 37 }, (_, i) => i + 1);
  const head = ["Year", "US Income", "Colorado Income", "US Home Price", "Colorado Home Price"];
  return (
    <div className="flex-1 min-w-0 overflow-hidden bg-white">
      <div className="grid grid-cols-[33px_67px_67px_67px_67px_67px_67px_28px] text-[13px] text-[#222] [font-family:'Liberation_Sans',sans-serif]">
        <div className="h-[21px] bg-[#e3ecf7] border-r border-b border-[#c3d1e3] flex items-end justify-end pr-[3px] pb-[3px]">
          <svg width="13" height="13" viewBox="0 0 13 13"><path d="M13 0v13H0z" fill="#b6c6d8" /></svg>
        </div>
        {cols.map((c, i) => (
          <div key={i} className="h-[21px] bg-[#e3ecf7] border-r border-b border-[#c3d1e3] flex items-center justify-center">
            {c}
          </div>
        ))}
        {rows.map((r) => {
          const data = r === 1 ? head : sheetRows[r - 2] ?? [];
          return (
            <React.Fragment key={r}>
              <div className="h-[20px] bg-[#e3ecf7] border-r border-b border-[#c3d1e3] flex items-center justify-center text-[#333]">{r}</div>
              {[0, 1, 2, 3, 4].map((c) => (
                <Cell key={c} value={data[c]} active={r === 1 && c === 0} left={r === 1} />
              ))}
              <Cell value={r === 17 ? "*estimated" : undefined} left />
              <Cell />
            </React.Fragment>
          );
        })}
      </div>
    </div>
  );
}

function RightPanel() {
  return (
    <div className="flex-1 flex flex-col min-w-0 bg-[#bfd2e8]">
      <PanelHeader title="Worksheet Manager" />
      <div className="h-[836px] shrink-0 flex flex-col bg-[#eef2f7] border border-[#8a98a8] mx-[2px] mt-[1px] px-[6px] pt-[8px] pb-[7px]">
        <div className="h-[22px] shrink-0 flex bg-white border-y-2 border-[#6f6f6f] text-[13px] text-[#222] [font-family:'Liberation_Sans',sans-serif]">
          <div className="w-[119px] border-x-2 border-[#6f6f6f] text-center leading-[18px]">A1</div>
          <div className="flex-1 pl-[6px] leading-[18px] border-r border-[#6f6f6f]">Year</div>
        </div>
        <div className="flex flex-1 min-h-0">
          <WorksheetGrid />
          <div className="w-[18px] shrink-0 flex flex-col bg-[#f0f0f0]">
            <div className="h-[16px] flex items-center justify-center"><ChevronUp size={12} strokeWidth={3} className="text-[#555]" /></div>
            <div className="h-[361px] bg-[#cdcdcd]" />
            <div className="flex-1" />
            <div className="h-[20px] flex items-center justify-center"><ChevronDown size={12} strokeWidth={3} className="text-[#555]" /></div>
          </div>
        </div>
        <div className="h-[15px] shrink-0 flex items-center bg-[#f0f0f0]">
          <ChevronLeft size={12} strokeWidth={3} className="ml-[2px] text-[#555] shrink-0" />
          <div className="ml-[2px] w-[215px] h-full bg-[#cdcdcd]" />
          <ChevronRight size={12} strokeWidth={3} className="ml-[217px] text-[#555] shrink-0" />
        </div>
        <div className="h-[7px] shrink-0 border-b border-[#d0d0d0]" />
        <div className="flex h-[21px] shrink-0 text-[11px] text-[#1f2d3d]">
          <div className="w-[75px] flex items-center justify-center bg-[#eeeeee] border-l-2 border-[#8a8a8a] pb-[1px]">Worksheet1</div>
          <div className="w-[98px] flex items-center justify-center bg-white">3D bar chart.dat</div>
        </div>
      </div>
      <div className="flex h-[20px] mt-[1px] ml-[3px] text-[11px] text-[#2f4660]">
        <div className="w-[113px] flex items-center justify-center bg-[#eff4fa] rounded-b-[2px]">Worksheet Manager</div>
        <div className="pl-[10px] flex items-center">Notifications</div>
      </div>
    </div>
  );
}

export default function App() {
  return (
    <div className="w-[1918px] h-[1037px] overflow-hidden flex flex-col bg-[#bfd2e8] text-[11px] [font-family:'Noto_Sans',sans-serif]">
      <TitleArea />
      <Ribbon />
      <div className="h-[885px] shrink-0 flex pt-[4px] bg-[#c3d5ea]">
        <LeftPanel />
        <div className="w-[7px] shrink-0" />
        <CenterPanel />
        <div className="w-[9px] shrink-0" />
        <RightPanel />
      </div>
      <div className="flex-1 flex items-start bg-gradient-to-b from-[#d8e4f2] to-[#bed1e6] text-[#2a3f58] text-[11px]">
        <span className="w-[1457px] pl-[6px] pt-[2px]">Nothing selected</span>
        <span className="w-[307px] pl-[5px] pt-[1px] border-l border-[#9fb2c8] h-full">x = 22.17 in, y = 7.18 in</span>
        <span className="border-l border-[#9fb2c8] h-full" />
      </div>
    </div>
  );
}
